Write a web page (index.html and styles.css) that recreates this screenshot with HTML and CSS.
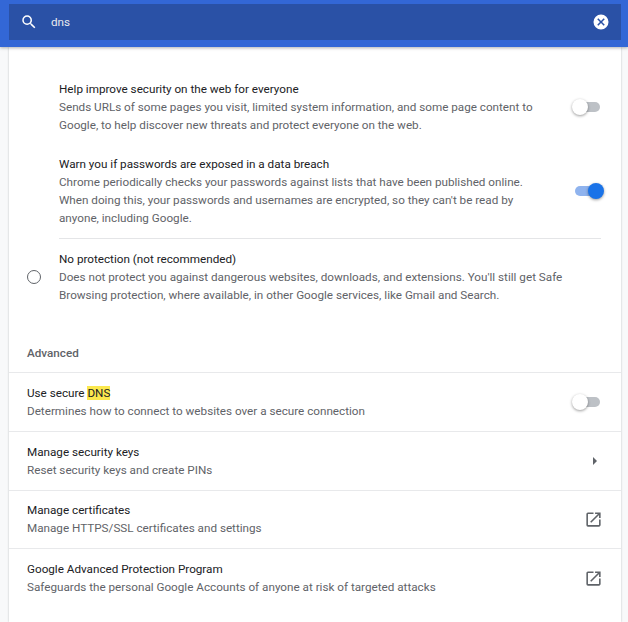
FILE: index.html
```html
<!DOCTYPE html>
<html lang="en">
<head>
    <meta charset="UTF-8">
    <title>Settings</title>
    <link rel="stylesheet" href="styles.css">
</head>
<body>
    <div class="toolbar">
        <div class="search">
            <svg class="search-icon" viewBox="0 0 24 24" width="18" height="18"><path d="M15.500 14h-.79l-.28-.27A6.470 6.470 0 0 0 16 9.500 6.500 6.500 0 1 0 9.500 16c1.610 0 3.090-.59 4.230-1.570l.27.28v.79l5 4.990L20.490 19l-4.990-5zm-6 0C7.010 14 5 11.990 5 9.500S7.010 5 9.500 5 14 7.010 14 9.500 11.990 14 9.500 14z"/></svg>
            <span class="search-text">dns</span>
            <svg class="clear-icon" viewBox="0 0 24 24" width="18" height="18"><path d="M12 2a10 10 0 1 0 0 20 10 10 0 0 0 0-20zm5 13.600L15.600 17 12 13.400 8.400 17 7 15.600 10.600 12 7 8.400 8.400 7l3.600 3.600L15.600 7 17 8.400 13.400 12 17 15.600z"/></svg>
        </div>
    </div>
    <div class="card">
        <div class="sub-row first">
            <div class="text">
                <div class="title">Help improve security on the web for everyone</div>
                <div class="desc">Sends URLs of some pages you visit, limited system information, and some page content to Google, to help discover new threats and protect everyone on the web.</div>
            </div>
            <div class="toggle"><span class="knob"></span></div>
        </div>
        <div class="sub-row second">
            <div class="text">
                <div class="title">Warn you if passwords are exposed in a data breach</div>
                <div class="desc">Chrome periodically checks your passwords against lists that have been published online. When doing this, your passwords and usernames are encrypted, so they can't be read by anyone, including Google.</div>
            </div>
            <div class="toggle on"><span class="knob"></span></div>
        </div>
        <div class="radio-row">
            <span class="radio"></span>
            <div class="radio-body">
                <div class="title">No protection (not recommended)</div>
                <div class="desc">Does not protect you against dangerous websites, downloads, and extensions. You'll still get Safe Browsing protection, where available, in other Google services, like Gmail and Search.</div>
            </div>
        </div>
        <div class="heading">Advanced</div>
        <div class="row">
            <div class="text">
                <div class="title">Use secure <mark>DNS</mark></div>
                <div class="desc">Determines how to connect to websites over a secure connection</div>
            </div>
            <div class="toggle"><span class="knob"></span></div>
        </div>
        <div class="row">
            <div class="text">
                <div class="title">Manage security keys</div>
                <div class="desc">Reset security keys and create PINs</div>
            </div>
            <svg class="arrow" viewBox="0 0 6 10" width="6" height="10"><path d="M1 1l4 4-4 4z"/></svg>
        </div>
        <div class="row">
            <div class="text">
                <div class="title">Manage certificates</div>
                <div class="desc">Manage HTTPS/SSL certificates and settings</div>
            </div>
            <svg class="external" viewBox="0 0 24 24" width="19" height="19"><path d="M19 19H5V5h7V3H5a2 2 0 0 0-2 2v14a2 2 0 0 0 2 2h14c1.100 0 2-.9 2-2v-7h-2v7zM14 3v2h3.590l-9.830 9.830 1.410 1.410L19 6.410V10h2V3h-7z"/></svg>
        </div>
        <div class="row">
            <div class="text">
                <div class="title">Google Advanced Protection Program</div>
                <div class="desc">Safeguards the personal Google Accounts of anyone at risk of targeted attacks</div>
            </div>
            <svg class="external" viewBox="0 0 24 24" width="19" height="19"><path d="M19 19H5V5h7V3H5a2 2 0 0 0-2 2v14a2 2 0 0 0 2 2h14c1.100 0 2-.9 2-2v-7h-2v7zM14 3v2h3.590l-9.830 9.830 1.410 1.410L19 6.410V10h2V3h-7z"/></svg>
        </div>
    </div>
</body>
</html>
```

FILE: styles.css
```css
html, body {
    height: 100%;
}
body {
    font-family: Roboto, "Liberation Sans", sans-serif;
    font-size: 11.7px;
    line-height: 18px;
    margin: 0;
    background: #f8f9fa;
    color: #202124;
    overflow: hidden;
}
.toolbar {
    background: #3367d6;
    height: 47px;
    padding: 4px 7px 0 9px;
    box-sizing: border-box;
    box-shadow: 0 1px 3px rgba(60, 64, 67, 0.4);
    position: relative;
}
.search {
    background: #2a51a6;
    height: 36px;
    display: flex;
    align-items: center;
    padding: 0 11px 0 11px;
    color: #e8eaed;
}
.search-icon {
    fill: #fff;
}
.search-text {
    margin-left: 13px;
    flex-grow: 1;
    font-size: 11.7px;
}
.clear-icon {
    fill: #fff;
}
.card {
    background: #fff;
    margin: 0 7px 0 9px;
    height: 575px;
    box-shadow: 0 0 2px rgba(60, 64, 67, 0.3);
}
.desc {
    color: #5f6368;
}
.text {
    flex-grow: 1;
}
.sub-row {
    display: flex;
    align-items: center;
    margin: 0 20px 0 50px;
}
.sub-row .text {
    max-width: 490px;
}
.first {
    padding-top: 33px;
}
.second {
    padding-top: 21px;
    padding-bottom: 11px;
    border-bottom: 1px solid #e4e5e7;
}
.toggle {
    width: 22px;
    height: 10px;
    border-radius: 5px;
    background: #bdc1c6;
    position: relative;
    margin-left: auto;
    margin-right: 1px;
    flex-shrink: 0;
}
.toggle .knob {
    position: absolute;
    left: -6px;
    top: -3px;
    width: 16px;
    height: 16px;
    border-radius: 50%;
    background: #fff;
    box-shadow: 0 1px 3px rgba(0, 0, 0, 0.4);
}
.toggle.on {
    background: #8fb3ee;
    margin-right: 4px;
}
.toggle.on .knob {
    left: 13px;
    background: #1a73e8;
}
.radio-row {
    display: flex;
    align-items: center;
    padding: 11px 20px 0 18px;
}
.radio {
    width: 14px;
    height: 14px;
    box-sizing: border-box;
    border: 1px solid #5f6368;
    border-radius: 50%;
    flex-shrink: 0;
    margin-right: 18px;
}
.heading {
    color: #5f6368;
    font-weight: 500;
    padding: 40px 18px 10px;
    border-bottom: 1px solid #e8e9eb;
}
.row {
    display: flex;
    align-items: center;
    justify-content: space-between;
    height: 57.8px;
    padding: 0 20px 0 18px;
    border-bottom: 1px solid #e8e9eb;
}
.row:last-child {
    border-bottom: none;
}
mark {
    background: #fbe84e;
    color: inherit;
}
.arrow {
    fill: #5f6368;
    margin-right: 3px;
}
.external {
    fill: #5f6368;
    margin-right: -2px;
}
```
